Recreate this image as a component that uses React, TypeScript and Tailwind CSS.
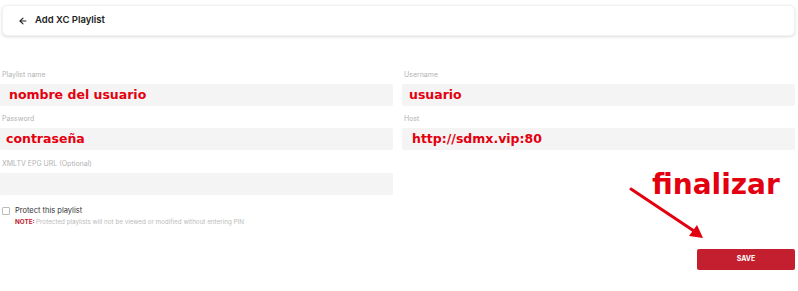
import React from "react";

const redText = "font-['DejaVu_Sans',sans-serif] font-bold text-[#e3000f]";

function Field({ label, value, pad, labelMt }: { label: string; value?: string; pad?: string; labelMt?: string }) {
  return (
    <div className={`flex flex-col ${labelMt ?? ""}`}>
      <div className="h-[10px] text-[7px] leading-[10px] text-[#b3b3b3] pl-[2px]">{label}</div>
      <div className={`mt-[4px] h-[22px] bg-[#f4f4f4] rounded-[2px] flex items-center ${pad ?? "pl-[8px]"}`}>
        {value && <span className={`${redText} text-[12.5px] leading-none`}>{value}</span>}
      </div>
    </div>
  );
}

export default function App() {
  return (
    <div className="relative w-[798px] h-[291px] bg-white font-['Inter',sans-serif] overflow-hidden">
      <div className="pt-[5px] px-[2px] pr-[3px]">
        <div className="h-[31px] rounded-[5px] bg-white shadow-[0_1px_3px_rgba(0,0,0,0.14)] border border-[#f1f1f1] flex items-center pl-[15px]">
          <svg width="10" height="10" viewBox="0 0 24 24" fill="none" stroke="#222" strokeWidth="2.6" strokeLinecap="round" strokeLinejoin="round">
            <path d="M19 12H5" />
            <path d="M12 19l-7-7 7-7" />
          </svg>
          <span className="ml-[7px] text-[9.5px] font-semibold text-[#222]">Add XC Playlist</span>
        </div>
      </div>

      <div className="mt-[34px] w-[795px] grid grid-cols-2 gap-x-[9px]">
        <div className="flex flex-col">
          <Field label="Playlist name" value="nombre del usuario" pad="pl-[9px]" />
          <Field label="Password" value="contraseña" pad="pl-[6px]" labelMt="mt-[8px]" />
          <Field label="XMLTV EPG URL (Optional)" labelMt="mt-[9px]" />
        </div>
        <div className="flex flex-col">
          <Field label="Username" value="usuario" pad="pl-[7px]" />
          <Field label="Host" value="http://sdmx.vip:80" pad="pl-[10px]" labelMt="mt-[8px]" />
        </div>
      </div>

      <div className="mt-[11px] flex items-start pl-[2px]">
        <div className="mt-[1px] w-[8px] h-[8px] border border-[#bbb] rounded-[1px] bg-white" />
        <div className="ml-[5px] flex flex-col">
          <span className="text-[7.5px] leading-[10px] text-[#333]">Protect this playlist</span>
          <span className="mt-[1px] text-[6.3px] leading-[10px] text-[#bbb]">
            <span className="font-bold text-[#c0202e]">NOTE: </span>
            Protected playlists will not be viewed or modified without entering PIN
          </span>
        </div>
      </div>

      <div className="mt-[22px] flex justify-end pr-[3px]">
        <button className="w-[98px] h-[21px] rounded-[2px] bg-[#c41f2f] text-white text-[7px] font-bold flex items-center justify-center">
          SAVE
        </button>
      </div>

      <div className={`absolute left-[652px] top-[171px] text-[28px] leading-none ${redText}`}>finalizar</div>
      <svg className="absolute left-0 top-0" width="798" height="291" viewBox="0 0 798 291">
        <line x1="631" y1="189" x2="694" y2="231" stroke="#e3000f" strokeWidth="3" strokeLinecap="round" />
        <polygon points="703,238 689,236 697,225" fill="#e3000f" />
      </svg>
    </div>
  );
}
